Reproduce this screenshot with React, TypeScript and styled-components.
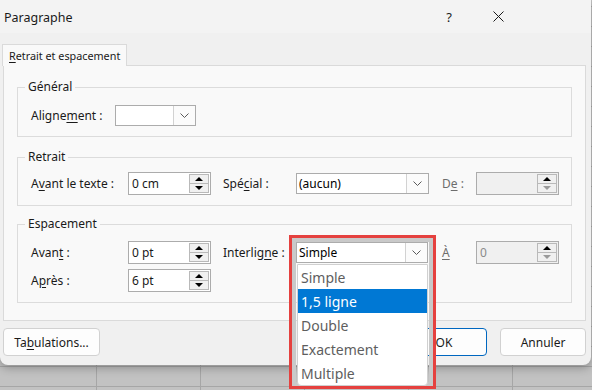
import React from "react";
import styled, { createGlobalStyle } from "styled-components";

const GlobalStyle = createGlobalStyle`
  html, body { margin: 0; padding: 0; }
  body {
    width: 592px;
    height: 390px;
    overflow: hidden;
    font-family: "Noto Sans", "DejaVu Sans", sans-serif;
    color: #1a1a1a;
    background-color: #c2c2c2;
    background-image:
      linear-gradient(to right, #a6a6a6 1px, transparent 1px),
      linear-gradient(to bottom, #a6a6a6 1px, transparent 1px);
    background-size: 104px 20px;
    background-position: 96px 6px;
  }
`;

const Root = styled.div`
  position: relative;
  width: 592px;
  height: 390px;
`;

const Dialog = styled.div`
  width: 591px;
  height: 365px;
  box-sizing: border-box;
  background: #f0f0f0;
  border-radius: 0 0 8px 8px;
  box-shadow: 0 3px 10px rgba(0, 0, 0, 0.28);
  display: flex;
  flex-direction: column;
`;

const TitleBar = styled.div`
  height: 33px;
  display: flex;
  align-items: center;
  padding-left: 4px;
  padding-right: 70px;
  background: #f3f3f3;
`;

const Title = styled.div`
  flex: 1;
  font-size: 12.5px;
  padding-top: 1px;
`;

const CaptionButton = styled.div<{ $w: number }>`
  width: ${(p) => p.$w}px;
  height: 33px;
  display: flex;
  align-items: center;
  justify-content: center;
  font-size: 13px;
`;

const Body = styled.div`
  flex: 1;
  display: flex;
  flex-direction: column;
  padding: 11px 5px 8px 3px;
`;

const TabStrip = styled.div`
  display: flex;
  height: 22px;
  margin-left: -1px;
  margin-bottom: -1px;
  position: relative;
  z-index: 1;
`;

const Tab = styled.div`
  width: 125px;
  box-sizing: border-box;
  border: 1px solid #dadada;
  border-bottom: none;
  background: #f9f9f9;
  font-size: 10.8px;
  display: flex;
  align-items: center;
  padding-left: 6px;
  white-space: nowrap;
`;

const Panel = styled.div`
  height: 256px;
  box-sizing: border-box;
  border: 1px solid #dadada;
  background: #f9f9f9;
  padding: 0 13px;
  display: flex;
  flex-direction: column;
`;

const Group = styled.fieldset<{ $mt: number; $pt: number; $pb: number }>`
  margin: ${(p) => p.$mt}px 0 0 0;
  padding: ${(p) => p.$pt}px 7px ${(p) => p.$pb}px 7px;
  border: 1px solid #dcdcdc;
  min-width: 0;
  display: flex;
  flex-direction: column;
  gap: 5px;
`;

const Legend = styled.legend`
  font-size: 12px;
  line-height: 16px;
  padding: 0 3px;
`;

const Row = styled.div`
  display: grid;
  grid-template-columns: 97px 95px 73px 146px 34px 83px;
  align-items: center;
  padding-left: 6px;
  height: 23px;
`;

const GeneralRow = styled.div`
  display: flex;
  align-items: center;
  padding-left: 6px;
  height: 21px;
`;

const Label = styled.div<{ $w?: number; $disabled?: boolean }>`
  font-size: 12px;
  white-space: nowrap;
  color: ${(p) => (p.$disabled ? "#6d6d6d" : "#1a1a1a")};
  ${(p) => (p.$w ? `width: ${p.$w}px;` : "")}
`;

const U = styled.span`
  text-decoration: underline;
  text-underline-offset: 2px;
`;

const SpinBox = styled.div<{ $disabled?: boolean }>`
  width: 83px;
  height: 23px;
  box-sizing: border-box;
  border: 1px solid #acacac;
  background: ${(p) => (p.$disabled ? "#f0f0f0" : "#ffffff")};
  display: flex;
`;

const SpinValue = styled.div<{ $disabled?: boolean }>`
  flex: 1;
  padding-left: 3px;
  display: flex;
  align-items: center;
  font-size: 12px;
  color: ${(p) => (p.$disabled ? "#8a8a8a" : "#1a1a1a")};
`;

const SpinButtons = styled.div`
  width: 20px;
  margin: 1px 1px 1px 0;
  display: flex;
  flex-direction: column;
`;

const SpinButton = styled.div`
  flex: 1;
  box-sizing: border-box;
  border: 1px solid #b9b9b9;
  background: #f0f0f0;
  display: flex;
  align-items: center;
  justify-content: center;
  & + & {
    border-top: none;
  }
`;

const Select = styled.div<{ $w: number }>`
  width: ${(p) => p.$w}px;
  height: 21px;
  box-sizing: border-box;
  border: 1px solid #acacac;
  background: #ffffff;
  display: flex;
`;

const SelectText = styled.div`
  flex: 1;
  padding-left: 2px;
  display: flex;
  align-items: center;
  font-size: 12px;
  color: #000;
`;

const SelectButton = styled.div`
  width: 21px;
  border-left: 1px solid #d2d2d2;
  background: #fbfbfb;
  display: flex;
  align-items: center;
  justify-content: center;
`;

const Footer = styled.div`
  display: flex;
  align-items: center;
  margin-top: 7px;
  height: 28px;
`;

const Button = styled.div<{ $w: number; $primary?: boolean }>`
  width: ${(p) => p.$w}px;
  height: 28px;
  box-sizing: border-box;
  border: 1px solid ${(p) => (p.$primary ? "#0067c0" : "#d1d1d1")};
  border-radius: 4px;
  background: #fdfdfd;
  font-size: 12px;
  display: flex;
  align-items: center;
  justify-content: center;
  & + & {
    margin-left: 13px;
  }
`;

const Spacer = styled.div`
  flex: 1;
`;

const Highlight = styled.div`
  position: absolute;
  left: 289px;
  top: 235px;
  width: 147px;
  height: 154px;
  box-sizing: border-box;
  border: 3px solid #e5413f;
  box-shadow: inset 0 0 0 4px #c9c9c9;
  pointer-events: none;
`;

const DropList = styled.div`
  position: absolute;
  left: 297px;
  top: 264px;
  width: 131px;
  box-sizing: border-box;
  border: 1px solid #d0d0d0;
  border-radius: 0 0 4px 4px;
  background: #ffffff;
  overflow: hidden;
`;

const DropItem = styled.div<{ $active?: boolean }>`
  height: 24px;
  padding-left: 3px;
  display: flex;
  align-items: center;
  font-size: 14px;
  color: ${(p) => (p.$active ? "#ffffff" : "#5e5e5e")};
  background: ${(p) => (p.$active ? "#0078d4" : "transparent")};
`;

const Up = ({ color = "#000" }: { color?: string }) => (
  <svg width="8" height="4" viewBox="0 0 8 4">
    <path d="M0 4 L4 0 L8 4 Z" fill={color} />
  </svg>
);

const Down = ({ color = "#000" }: { color?: string }) => (
  <svg width="8" height="4" viewBox="0 0 8 4">
    <path d="M0 0 L4 4 L8 0 Z" fill={color} />
  </svg>
);

const Chevron = () => (
  <svg width="9" height="5" viewBox="0 0 9 5">
    <path d="M0.5 0.5 L4.5 4.5 L8.5 0.5" fill="none" stroke="#5a5a5a" strokeWidth="1" />
  </svg>
);

const CloseIcon = () => (
  <svg width="11" height="11" viewBox="0 0 11 11">
    <path d="M0.5 0.5 L10.5 10.5 M10.5 0.5 L0.5 10.5" stroke="#1a1a1a" strokeWidth="1" />
  </svg>
);

const Spin = ({ value, disabled }: { value: string; disabled?: boolean }) => (
  <SpinBox $disabled={disabled}>
    <SpinValue $disabled={disabled}>{value}</SpinValue>
    <SpinButtons>
      <SpinButton>
        <Up />
      </SpinButton>
      <SpinButton>
        <Down color={disabled ? "#9a9a9a" : "#000"} />
      </SpinButton>
    </SpinButtons>
  </SpinBox>
);

const Combo = ({ value, w }: { value: string; w: number }) => (
  <Select $w={w}>
    <SelectText>{value}</SelectText>
    <SelectButton>
      <Chevron />
    </SelectButton>
  </Select>
);

export default function App() {
  return (
    <Root>
      <GlobalStyle />
      <Dialog>
        <TitleBar>
          <Title>Paragraphe</Title>
          <CaptionButton $w={52}>?</CaptionButton>
          <CaptionButton $w={46}>
            <CloseIcon />
          </CaptionButton>
        </TitleBar>
        <Body>
          <TabStrip>
            <Tab>
              <U>R</U>etrait et espacement
            </Tab>
          </TabStrip>
          <Panel>
            <Group $mt={13} $pt={10} $pb={10}>
              <Legend>Général</Legend>
              <GeneralRow>
                <Label $w={84}>
                  Aligne<U>m</U>ent :
                </Label>
                <Combo value="" w={81} />
              </GeneralRow>
            </Group>
            <Group $mt={12} $pt={7} $pb={10}>
              <Legend>Retrait</Legend>
              <Row>
                <Label>
                  A<U>v</U>ant le texte :
                </Label>
                <Spin value="0 cm" />
                <Label>
                  Spé<U>c</U>ial :
                </Label>
                <Combo value="(aucun)" w={133} />
                <Label $disabled>
                  D<U>e</U> :
                </Label>
                <Spin value="" disabled />
              </Row>
            </Group>
            <Group $mt={10} $pt={9} $pb={10}>
              <Legend>Espacement</Legend>
              <Row>
                <Label>
                  Avan<U>t</U> :
                </Label>
                <Spin value="0 pt" />
                <Label>
                  Interlig<U>n</U>e :
                </Label>
                <Combo value="Simple" w={132} />
                <Label $disabled>
                  <U>À</U>
                </Label>
                <Spin value="0" disabled />
              </Row>
              <Row>
                <Label>
                  A<U>p</U>rès :
                </Label>
                <Spin value="6 pt" />
              </Row>
            </Group>
          </Panel>
          <Footer>
            <Button $w={97}>
              Ta<U>b</U>ulations...
            </Button>
            <Spacer />
            <Button $w={86} $primary>
              OK
            </Button>
            <Button $w={86}>Annuler</Button>
          </Footer>
        </Body>
      </Dialog>
      <Highlight />
      <DropList>
        <DropItem>Simple</DropItem>
        <DropItem $active>1,5 ligne</DropItem>
        <DropItem>Double</DropItem>
        <DropItem>Exactement</DropItem>
        <DropItem>Multiple</DropItem>
      </DropList>
    </Root>
  );
}
